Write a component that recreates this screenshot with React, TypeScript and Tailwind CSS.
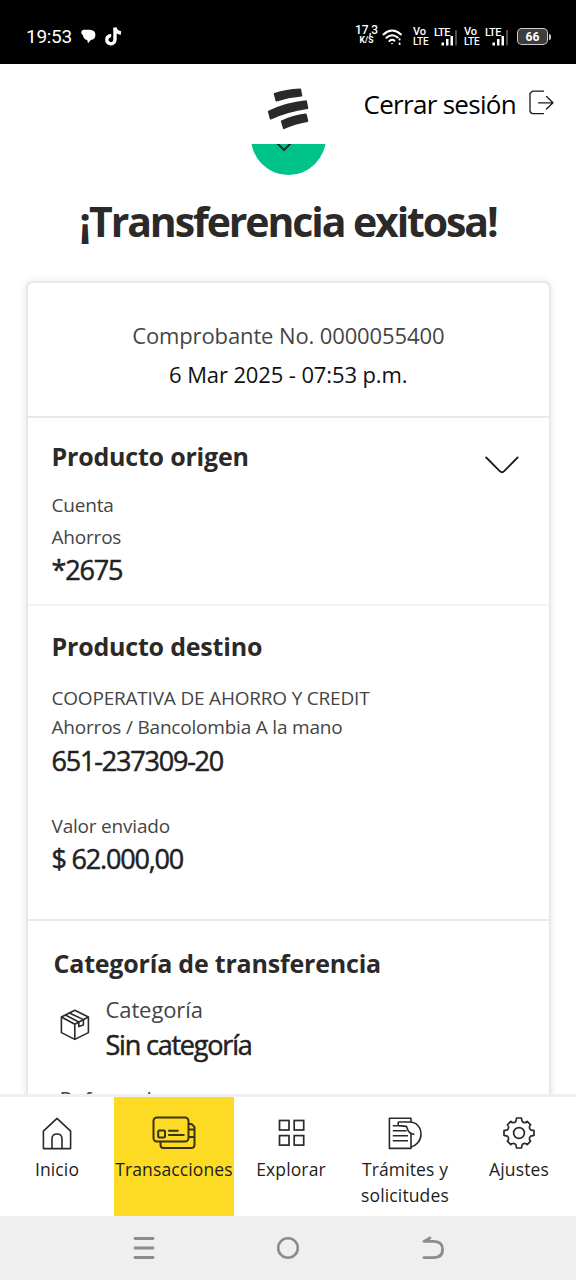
import type { ReactNode } from "react";

function Logo() {
  return (
    <svg className="h-[42px] w-[42px]" viewBox="0 0 42 42" fill="#2c2a29" stroke="#2c2a29" strokeWidth="1.8" strokeLinejoin="round">
      <path d="M7.6 5.8 Q19 2 33.2 1.4 L34.4 7.6 Q21 8.8 9.4 12.6 Z" />
      <path d="M1.8 23.6 Q19 15.2 39 13.2 L40.4 20 Q20.5 22.8 3.6 30.6 Z" />
      <path d="M14.8 33.2 Q26 28 38.8 26.4 L40.4 33 Q28 35 16.8 40.2 Z" />
    </svg>
  );
}

function StatusBar() {
  return (
    <div className="flex h-16 shrink-0 items-center bg-black pt-[9px] pr-[25px] pl-[26px] font-['Roboto',sans-serif] text-white">
      <span className="w-[46px] text-[19px] leading-none whitespace-nowrap tracking-[-0.3px]">19:53</span>
      <svg className="ml-[9px] h-[15px] w-[15px]" viewBox="0 0 15 15" fill="currentColor">
        <path d="M2.4 0.8 H8.6 Q14.4 1 14.4 5.8 Q14.4 10.6 9.8 11 L7 14.2 L6.2 11 Q2.4 10.4 2 6.2 Q0.2 5.2 0.2 3 Q0.8 1 2.4 0.8 Z" />
      </svg>
      <svg className="ml-[9px] h-[19px] w-[17px]" viewBox="0 0 17 19" fill="none" stroke="currentColor" strokeWidth="3.4">
        <path d="M10 0.5 V12.6 A4.1 4.1 0 1 1 6.2 8.6" />
        <path d="M10 1 Q11 5.4 16 6" />
      </svg>

      <div className="ml-auto flex items-center">
        <div className="mt-[-3px] w-[23px] text-center font-medium">
          <div className="text-[12px] leading-[11px]">17,3</div>
          <div className="text-[8.5px] leading-[9px] font-bold">K/S</div>
        </div>
        <svg className="ml-[4px] h-[18px] w-[21px]" viewBox="0 0 21 18" fill="none" stroke="currentColor" strokeWidth="2" strokeLinecap="round">
          <path d="M1.5 6.4 Q10 -1.4 19 6.4" />
          <path d="M4.4 9.8 Q10 4.8 15.8 9.6" />
          <path d="M7.4 13 Q10 10.8 12.4 12.6" />
          <circle cx="10" cy="15.6" r="0.8" fill="currentColor" stroke="none" />
          <path d="M17.6 11.2 v0.4 M17.6 15.6 v0.4" />
        </svg>
        <VoLte className="ml-[10px]" />
        <Signal className="ml-1" />
        <VoLte className="ml-[7px]" />
        <Signal className="ml-1" />
        <div className="ml-[9px] flex h-[17px] w-[31px] items-center justify-center rounded-[5px] border-[1.5px] border-white/75 bg-[#3d3d3d] text-[12px] leading-none font-bold">
          66
        </div>
        <div className="ml-px h-[6px] w-[2px] rounded-r bg-white/80" />
      </div>
    </div>
  );
}

function VoLte({ className }: { className: string }) {
  return (
    <div className={`w-4 text-[11px] leading-[10px] font-medium ${className}`}>
      <div>Vo</div>
      <div className="text-[10px] tracking-[-0.2px]">LTE</div>
    </div>
  );
}

function Signal({ className }: { className: string }) {
  return (
    <div className={`relative h-5 w-[24px] ${className}`}>
      <span className="absolute top-0 left-px text-[11px] leading-[11px] font-medium tracking-[-0.5px]">LTE</span>
      <svg className="absolute inset-0 h-5 w-[24px]" viewBox="0 0 24 20" fill="currentColor">
        <rect x="8.5" y="15.5" width="2.5" height="3" />
        <rect x="13" y="12" width="2.5" height="6.5" />
        <rect x="17.5" y="9" width="2.5" height="9.5" />
        <rect x="22" y="3" width="2" height="15.5" fill="#4d4d4d" />
      </svg>
    </div>
  );
}

function Header() {
  return (
    <header className="flex h-20 shrink-0 items-start bg-white pr-[22px] pl-[267px] text-black">
      <div className="mt-6">
        <Logo />
      </div>
      <div className="ml-auto flex items-start gap-[13px]">
        <span className="mt-5 text-[26px] leading-10 tracking-[-0.7px] whitespace-nowrap">Cerrar sesión</span>
        <svg className="mt-[26px] h-[26px] w-[25px]" viewBox="0 0 25 26" fill="none" stroke="#1a1a1a" strokeWidth="1.3" strokeLinecap="round" strokeLinejoin="round">
          <path d="M14.5 1.2 H3.5 L1 3.5 V20.5 Q1 23.6 4 23.6 H14.5" />
          <path d="M9.5 12.8 H23.6 M17.5 6.5 L24 12.8 L17.5 19" />
        </svg>
      </div>
    </header>
  );
}

function Title({ children }: { children: ReactNode }) {
  return <h2 className="text-[25px] leading-8 font-bold tracking-[-0.2px] whitespace-nowrap text-[#2c2a29]">{children}</h2>;
}

function Value({ children }: { children: ReactNode }) {
  return (
    <p className="text-[27px] leading-8 font-medium tracking-[-1.2px] whitespace-nowrap text-[#222] [-webkit-text-stroke:0.5px_#222]">
      {children}
    </p>
  );
}

function Receipt() {
  return (
    <div className="mr-[25px] ml-[25.5px] mt-[35px] h-[860px] shrink-0 rounded-[7px] border-x-2 border-t-2 border-[#e8e8e8] bg-white shadow-[0_0_8px_rgba(0,0,0,0.1)]">
      <section className="h-[135px] border-b-2 border-[#e8e8e8] pt-[33px] text-center text-[22px] leading-[39px] tracking-[-0.12px]">
        <p className="text-[#454545]">Comprobante No. 0000055400</p>
        <p className="text-[#111]">6 Mar 2025 - 07:53 p.m.</p>
      </section>

      <section className="relative h-[188px] border-b-2 border-[#f4f4f4] pt-[22px] pl-6">
        <Title>Producto origen</Title>
        <svg className="absolute top-[38px] right-[30px] h-[19px] w-[34px]" viewBox="0 0 34 19" fill="none" stroke="#1a1a1a" strokeWidth="1.8" strokeLinecap="round">
          <path d="M1.2 1.5 L14.8 15.2 Q17 17.2 19.2 15.2 L32.6 1.5" />
        </svg>
        <div className="mt-[17px] text-[19px] leading-8 tracking-[-0.2px] text-[#454545]">
          <p>Cuenta</p>
          <p>Ahorros</p>
        </div>
        <div className="mt-px">
          <Value>*2675</Value>
        </div>
      </section>

      <section className="h-[315px] border-b-2 border-[#e8e8e8] pt-6 pl-6">
        <Title>Producto destino</Title>
        <div className="mt-[22px] text-[19px] leading-[29px] tracking-[-0.2px] whitespace-nowrap text-[#454545]">
          <p>COOPERATIVA DE AHORRO Y CREDIT</p>
          <p>Ahorros / Bancolombia A la mano</p>
        </div>
        <div className="mt-[3px]">
          <Value>651-237309-20</Value>
        </div>
        <p className="mt-[33px] text-[19px] leading-8 tracking-[-0.2px] text-[#454545]">Valor enviado</p>
        <div className="mt-px">
          <Value>$ 62.000,00</Value>
        </div>
      </section>

      <section className="pt-[26px] pl-[26px]">
        <Title>Categoría de transferencia</Title>
        <div className="mt-[14px] flex">
          <svg className="mt-[16px] ml-[6px] h-[32px] w-[30px]" viewBox="0 0 30 32" fill="none" stroke="#2c2a29" strokeWidth="1.6" strokeLinejoin="round">
            <path d="M14.8 1.2 L28.4 8 V23.6 L14.8 30.4 L1.4 23.6 V8 Z" />
            <path d="M1.4 8 L14.8 15.2 L28.4 8 M14.8 15.2 V30.4" />
            <path d="M5.4 6 L18.8 13 M9.4 4 L23.4 10.6 M18.8 13 V17.6 L23.4 16 V10.6" />
          </svg>
          <div className="ml-4">
            <p className="text-[22px] leading-8 tracking-[-0.1px] text-[#454545]">Categoría</p>
            <div className="mt-1">
              <Value>Sin categoría</Value>
            </div>
          </div>
        </div>
        <p className="mt-[23px] ml-[6px] text-[21px] leading-8 text-[#454545]">Referencia</p>
      </section>
    </div>
  );
}

function NavItem({ icon, label, className }: { icon: ReactNode; label: ReactNode; className: string }) {
  return (
    <div className={`flex flex-col items-center pt-[18px] ${className}`}>
      <div className="flex h-9 items-center justify-center">{icon}</div>
      <div className="mt-[5px] text-center text-[17.5px] leading-[26px] tracking-[0.13px] whitespace-nowrap text-[#1d1d1d]">{label}</div>
    </div>
  );
}

function BottomNav() {
  return (
    <nav className="flex h-[122px] shrink-0 border-t-[3px] border-[#f0f0f0] bg-white">
      <NavItem
        className="w-[114px]"
        label="Inicio"
        icon={
          <svg className="h-[33px] w-[30px]" viewBox="0 0 30 33" fill="none" stroke="#2c2a29" strokeWidth="1.6" strokeLinejoin="round">
            <path d="M1.4 31.6 V14.2 L15 1.4 L28.6 14.2 V31.6 Z" />
            <path d="M10 31.6 V21.8 Q10 17 15 17 Q20 17 20 21.8 V31.6" />
          </svg>
        }
      />
      <NavItem
        className="w-[120px] bg-[#fdda24]"
        label="Transacciones"
        icon={
          <svg className="h-[34px] w-[44px]" viewBox="0 0 44 34" fill="none" stroke="#3a3314" strokeWidth="2" strokeLinejoin="round">
            <rect x="1.5" y="1.5" width="35" height="24" rx="3.5" />
            <path d="M37 8 H39.5 L42.5 11 V28.5 Q42.5 32 39 32 H11.5 Q8.5 32 8.5 28.5 V26" />
            <path d="M37 13.4 H42 M37 21 H42" />
            <rect x="6.2" y="14.6" width="6.8" height="6.8" rx="1" />
            <path d="M16.2 14.8 H26.5 M16.2 19 H32.5" />
          </svg>
        }
      />
      <NavItem
        className="w-[114px]"
        label="Explorar"
        icon={
          <svg className="h-[28px] w-[27px]" viewBox="0 0 27 28" fill="none" stroke="#2c2a29" strokeWidth="1.7">
            <rect x="1.5" y="1.5" width="9.5" height="9.5" />
            <rect x="16.2" y="1.5" width="9.5" height="9.5" />
            <rect x="1.5" y="16.6" width="9.5" height="9.5" />
            <rect x="16.2" y="16.6" width="9.5" height="9.5" />
          </svg>
        }
      />
      <NavItem
        className="w-[114px]"
        label={
          <>
            Trámites y
            <br />
            solicitudes
          </>
        }
        icon={
          <svg className="h-[33px] w-[34px]" viewBox="0 0 34 33" fill="none" stroke="#2c2a29" strokeWidth="1.6" strokeLinejoin="round">
            <path d="M23 5.2 V1.2 H1.4 V31.4 H23 V15.6" />
            <path d="M4.8 8.8 H9.8 M4.8 13.8 H18.6 M4.8 18.8 H20 M4.8 23.8 H20" />
            <path d="M10.2 5 H21.6 C28.4 5 33 10.2 33 17 C33 23.8 28.4 28.8 23 30" />
            <path d="M10.2 5 V8.6 L18.4 9.4 L20.4 14.2 Q22.4 17.4 26.4 17.4" />
          </svg>
        }
      />
      <NavItem
        className="w-[114px]"
        label="Ajustes"
        icon={
          <svg className="h-[32px] w-[32px]" viewBox="0 0 32 32" fill="none" stroke="#2c2a29" strokeWidth="1.7" strokeLinejoin="round">
            <circle cx="16" cy="16" r="5.4" />
            <path d="M13.6 1 H18.4 L19.2 4.4 A3.2 3.2 0 0 0 24.2 4.4 L27.6 7.8 A3.2 3.2 0 0 0 27.6 12.8 L31 13.6 V18.4 L27.6 19.2 A3.2 3.2 0 0 0 27.6 24.2 L24.2 27.6 A3.2 3.2 0 0 0 19.2 27.6 L18.4 31 H13.6 L12.8 27.6 A3.2 3.2 0 0 0 7.8 27.6 L4.4 24.2 A3.2 3.2 0 0 0 4.4 19.2 L1 18.4 V13.6 L4.4 12.8 A3.2 3.2 0 0 0 4.4 7.8 L7.8 4.4 A3.2 3.2 0 0 0 12.8 4.4 Z" />
          </svg>
        }
      />
    </nav>
  );
}

function SystemBar() {
  return (
    <div className="flex h-16 shrink-0 items-center justify-center gap-[120px] bg-[#efefef]">
      <svg className="h-6 w-6" viewBox="0 0 24 24" fill="none" stroke="#8c8c8c" strokeWidth="2.8" strokeLinecap="round">
        <path d="M3 2.5 H21 M3 12 H21 M3 21.5 H21" />
      </svg>
      <svg className="h-6 w-6" viewBox="0 0 24 24" fill="none" stroke="#8c8c8c" strokeWidth="2.6">
        <circle cx="12" cy="12" r="9.8" />
      </svg>
      <svg className="h-6 w-6" viewBox="0 0 24 24" fill="none" stroke="#8c8c8c" strokeWidth="2.8" strokeLinecap="round" strokeLinejoin="round">
        <path d="M10 2 L4 5.4 H14 Q22.6 5.6 22.6 13.6 Q22.6 21.6 14 21.6 H4" />
      </svg>
    </div>
  );
}

export default function App() {
  return (
    <div className="flex h-[1280px] w-[576px] flex-col overflow-hidden bg-white font-['Open_Sans','Noto_Sans',sans-serif]">
      <StatusBar />
      <Header />
      <main className="flex min-h-0 flex-1 flex-col overflow-hidden">
        <div className="mx-auto -mt-[44px] flex h-[75px] w-[75px] shrink-0 justify-center rounded-full bg-[#00c389]">
          <svg className="mt-[36px] mr-[8px] h-[16px] w-[24px]" viewBox="0 0 24 16" fill="none" stroke="#1d2b26" strokeWidth="2">
            <path d="M1 3 L12 14 L23 3" />
          </svg>
        </div>
        <h1 className="mt-[21px] text-center text-[41px] leading-[50px] font-bold tracking-[-2.1px] whitespace-nowrap text-[#2c2a29]">
          ¡Transferencia exitosa!
        </h1>
        <Receipt />
      </main>
      <BottomNav />
      <SystemBar />
    </div>
  );
}
